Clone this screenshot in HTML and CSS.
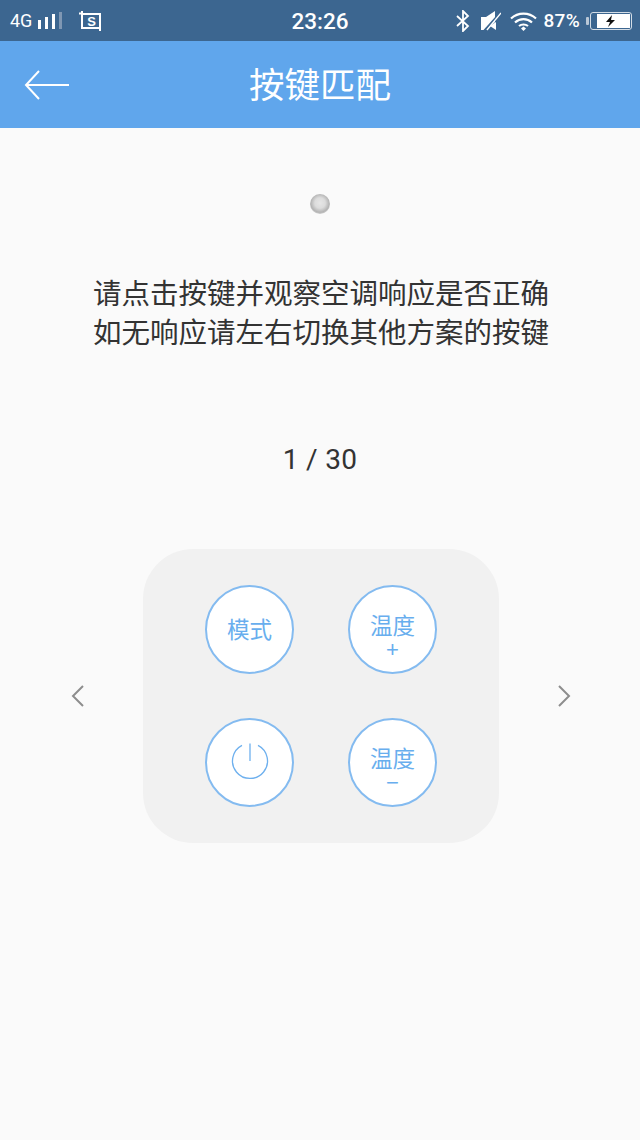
FILE: index.html
```html
<!DOCTYPE html>
<html lang="zh-CN">
<head>
  <meta charset="UTF-8">
  <title>按键匹配</title>
  <link rel="stylesheet" href="styles.css">
</head>
<body>
  <div class="status">
    <div class="status-left">
      <span class="net">4G</span>
      <svg class="signal" width="24" height="18" viewBox="0 0 24 18">
        <rect x="0" y="8" width="3" height="9" fill="#fff"/>
        <rect x="7" y="5" width="3" height="12" fill="#fff"/>
        <rect x="14" y="2" width="3" height="15" fill="#fff"/>
        <rect x="21" y="0" width="3" height="17" fill="#7f97b3"/>
      </svg>
      <svg class="shot" width="24" height="20" viewBox="0 0 24 20">
        <path d="M0 2.500H4M3 0V17H22M3 3H21V20" fill="none" stroke="#fff" stroke-width="2"/>
        <text x="12.500" y="14.500" class="shot-s">S</text>
      </svg>
    </div>
    <div class="clock">23:26</div>
    <div class="status-right">
      <svg width="14" height="22" viewBox="0 0 14 22">
        <path d="M1 6L12 16L7 21V1L12 6L1 16" fill="none" stroke="#fff" stroke-width="1.800"/>
      </svg>
      <svg class="mute" width="20" height="20" viewBox="0 0 20 20">
        <path d="M0 6H5L14 0V11L5 19H0Z" fill="#fff"/>
        <path d="M15 11V19L9 15Z" fill="#fff"/>
        <path d="M3 20L20 1" stroke="#3c6690" stroke-width="2"/>
        <path d="M6 19L20 2" stroke="#fff" stroke-width="1.300"/>
      </svg>
      <svg class="wifi" width="27" height="20" viewBox="0 0 27 20">
        <path d="M1 7.500C8 1 19 1 26 7.500M5 11.500C10 7 17 7 22 11.500M9 15C11.500 13 15.500 13 18 15" fill="none" stroke="#fff" stroke-width="2.200"/>
        <path d="M11 17.500L13.500 15.500L16 17.500L13.500 20Z" fill="#fff"/>
      </svg>
      <span class="pct">87%</span>
      <svg class="battery" width="46" height="20" viewBox="0 0 46 20">
        <rect x="0" y="6" width="3" height="8" rx="1" fill="#b9c7d6"/>
        <rect x="4.500" y="1.500" width="41" height="17" rx="2.500" fill="none" stroke="#d4dde6" stroke-width="1"/>
        <rect x="11" y="3" width="33" height="14" fill="#fff"/>
        <path d="M26 4L20 11H24L22 16L29 9H25Z" fill="#111"/>
      </svg>
    </div>
  </div>

  <div class="appbar">
    <svg class="back" width="46" height="30" viewBox="0 0 46 30">
      <path d="M45 15H2M15 1L2 15L15 29" fill="none" stroke="#fff" stroke-width="2"/>
    </svg>
    <h1 class="title">按键匹配</h1>
  </div>

  <div class="main">
    <div class="led"></div>
    <p class="tip">请点击按键并观察空调响应是否正确<br>如无响应请左右切换其他方案的按键</p>
    <div class="count">1 / 30</div>

    <div class="remote-row">
      <svg class="chev" width="14" height="24" viewBox="0 0 14 24">
        <path d="M12 2L2 12L12 22" fill="none" stroke="#8d8d8d" stroke-width="2"/>
      </svg>
      <div class="pad">
        <div class="key">模式</div>
        <div class="key key-two"><span>温度</span><span class="sign">+</span></div>
        <div class="key">
          <svg width="38" height="38" viewBox="0 0 38 38">
            <path d="M11 3.400A17.500 17.500 0 1 0 27 3.400" fill="none" stroke="#6eb0ee" stroke-width="1.300"/>
            <path d="M19 1.500V19" stroke="#6eb0ee" stroke-width="1.300"/>
          </svg>
        </div>
        <div class="key key-two"><span>温度</span><span class="sign">−</span></div>
      </div>
      <svg class="chev" width="14" height="24" viewBox="0 0 14 24">
        <path d="M2 2L12 12L2 22" fill="none" stroke="#8d8d8d" stroke-width="2"/>
      </svg>
    </div>
  </div>
</body>
</html>
```

FILE: styles.css
```css
*{
  margin: 0;
  padding: 0;
  box-sizing: border-box;
}
body{
  width: 640px;
  height: 1140px;
  overflow: hidden;
  background: #fafafa;
  font-family: "Noto Sans CJK SC", "Liberation Sans", sans-serif;
}
.status{
  height: 41px;
  background: #3c6690;
  color: #fff;
  display: flex;
  align-items: center;
  justify-content: space-between;
  position: relative;
}
.status-left{
  display: flex;
  align-items: center;
  padding-left: 10px;
}
.net{
  font-family: Roboto, sans-serif;
  font-size: 18px;
}
.signal{
  margin-left: 6px;
}
.shot{
  margin-left: 17px;
}
.shot-s{
  font-family: "Liberation Sans", sans-serif;
  font-size: 13px;
  font-weight: bold;
  fill: #fff;
  text-anchor: middle;
}
.clock{
  position: absolute;
  left: 0;
  right: 0;
  text-align: center;
  font-family: Roboto, sans-serif;
  font-size: 22.500px;
  font-weight: 500;
}
.status-right{
  display: flex;
  align-items: center;
  padding-right: 8px;
}
.mute{
  margin-left: 11px;
}
.wifi{
  margin-left: 9px;
}
.pct{
  margin-left: 7px;
  margin-right: 1px;
  font-family: Roboto, sans-serif;
  font-size: 19px;
  font-weight: 500;
  letter-spacing: 0.3px;
}
.battery{
  margin-left: 5px;
}
.appbar{
  height: 87px;
  padding-bottom: 3px;
  background: #60a6ec;
  display: flex;
  align-items: center;
  justify-content: center;
  position: relative;
}
.back{
  position: absolute;
  left: 24px;
  top: 29px;
}
.title{
  color: #fff;
  font-size: 35.500px;
  font-weight: 400;
  line-height: 1;
}
.main{
  display: flex;
  flex-direction: column;
  align-items: center;
}
.led{
  width: 20px;
  height: 20px;
  margin-top: 66px;
  border-radius: 50%;
  background: radial-gradient(circle at 50% 45%, #e6e6e6 0, #dcdcdc 35%, #b4b4b4 62%, #dedede 82%, #fafafa 100%);
}
.tip{
  margin-top: 58px;
  padding-left: 2px;
  color: #333;
  font-size: 28.500px;
  line-height: 39px;
  text-align: center;
}
.count{
  margin-top: 90px;
  color: #333;
  font-family: Roboto, sans-serif;
  font-size: 28px;
  line-height: 40px;
  letter-spacing: 0.3px;
}
.remote-row{
  margin-top: 69px;
  width: 640px;
  padding-left: 2px;
  display: flex;
  align-items: center;
  justify-content: center;
  gap: 58px;
}
.pad{
  width: 356px;
  height: 294px;
  padding: 36px 62px;
  background: #f1f1f1;
  border-radius: 50px;
  display: grid;
  grid-template-columns: 89px 89px;
  grid-template-rows: 89px 89px;
  justify-content: space-between;
  align-content: space-between;
}
.key{
  border: 2px solid #84bbf0;
  border-radius: 50%;
  background: #fff;
  color: #68aeee;
  font-size: 22.500px;
  line-height: 30px;
  padding-bottom: 4px;
  display: flex;
  flex-direction: column;
  align-items: center;
  justify-content: center;
}
.key-two{
  padding-bottom: 0;
  padding-top: 9px;
}
.sign{
  font-family: "Liberation Sans", sans-serif;
  font-size: 22px;
  line-height: 20px;
  margin-top: 1px;
}
```
